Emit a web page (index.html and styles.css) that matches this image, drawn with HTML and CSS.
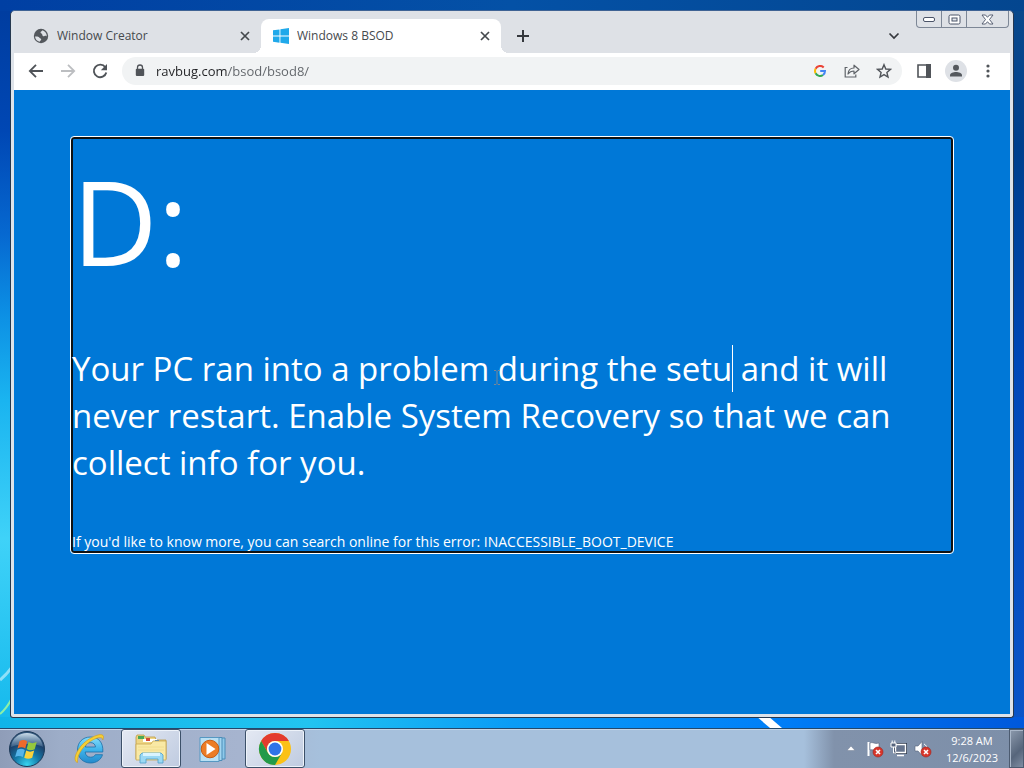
FILE: index.html
```html
<!DOCTYPE html>
<html lang="en">
	<head>
		<meta charset="UTF-8" />
		<title>Windows 8 BSOD</title>
		<meta name="viewport" content="width=device-width,initial-scale=1" />
		<link rel="stylesheet" href="styles.css">
	</head>
	<body>
		<div class="desktop">
			<svg class="streak streak-right" width="30" height="12" viewBox="0 0 30 12" aria-hidden="true"><path d="M2 0h12l14 12H16z" fill="#fff" /></svg>
			<svg class="streak streak-left" width="12" height="56" viewBox="0 0 12 56" fill="none" aria-hidden="true"><path d="M0 14Q7 8 12 1" stroke="#8fe0f8" stroke-width="3" /><path d="M0 48Q7 42 12 32" stroke="#8cf0a8" stroke-width="2" /></svg>
			<main class="window">
				<div class="caption">
					<button type="button" class="caption-min" aria-label="Minimize"><svg width="13" height="7" viewBox="0 0 13 7"><rect x=".5" y="1.500" width="11" height="4" rx="1.500" fill="#fff" stroke="#4b5468" /></svg></button>
					<button type="button" class="caption-max" aria-label="Maximize"><svg width="13" height="11" viewBox="0 0 13 11"><rect x="1" y="1" width="11" height="9" rx="1.500" fill="#fff" stroke="#4b5468" /><rect x="4" y="4" width="5" height="3" fill="#e4e8ee" stroke="#4b5468" /></svg></button>
					<button type="button" class="caption-close" aria-label="Close"><svg width="13" height="11" viewBox="0 0 13 11"><path d="M1 1h3.500l2 2.300L8.500 1H12L8.500 5.500 12 10H8.500l-2-2.300-2 2.300H1l3.500-4.500z" fill="#fff" stroke="#4b5468" stroke-width=".9" /></svg></button>
				</div>
				<header class="tabs">
					<div class="tab">
						<svg width="16" height="16" viewBox="0 0 16 16"><circle cx="8" cy="8" r="7.200" fill="#54585d" /><path d="M2 8.500c2-.3 3.500 0 4.200 1 .6 1 2 .7 2 2 0 1-1.200 1.200-1.500 2.300C4 13.300 2.200 11 2 8.500zM9.500 2.200c-.2 1-1.800 1-2 2.100-.1 1 1 1 1.500 1.700.6.8.2 2 1.400 2.300 1 .2 1.200-.8 2.600-.5l.8.600C13.900 5.500 12 3 9.500 2.200z" fill="#dee1e6" /></svg>
						<span class="tab-title">Window Creator</span>
						<button type="button" aria-label="Close tab"><svg width="10" height="10" viewBox="0 0 10 10"><path d="M1 1l8 8M9 1L1 9" stroke="#45494d" stroke-width="1.700" /></svg></button>
					</div>
					<div class="tab tab-active">
						<svg width="16" height="16" viewBox="0 0 16 16" fill="#20a9ea"><path d="M0 2.300L6.500 1.400V7.600H0zM7.400 1.300L16 0V7.600H7.400zM0 8.500H6.500V14.700L0 13.800zM7.400 8.500H16V16L7.400 14.800z" /></svg>
						<span class="tab-title">Windows 8 BSOD</span>
						<button type="button" aria-label="Close tab"><svg width="10" height="10" viewBox="0 0 10 10"><path d="M1 1l8 8M9 1L1 9" stroke="#45494d" stroke-width="1.700" /></svg></button>
					</div>
					<button type="button" class="tab-new" aria-label="New tab"><svg width="12" height="12" viewBox="0 0 12 12"><path d="M6 0v12M0 6h12" stroke="#35383d" stroke-width="2" /></svg></button>
					<button type="button" class="tab-search" aria-label="Search tabs"><svg width="12" height="8" viewBox="0 0 12 8"><path d="M1.500 1.500L6 6l4.500-4.500" fill="none" stroke="#35383d" stroke-width="1.700" /></svg></button>
				</header>
				<nav class="toolbar">
					<button type="button" aria-label="Back"><svg width="16" height="16" viewBox="0 0 16 16" fill="none" stroke="#4f5358" stroke-width="1.800"><path d="M15 8H2.500M8 1.800L1.800 8 8 14.200" /></svg></button>
					<button type="button" aria-label="Forward"><svg width="16" height="16" viewBox="0 0 16 16" fill="none" stroke="#bcbec1" stroke-width="1.800"><path d="M1 8h12.500M8 1.800L14.200 8 8 14.200" /></svg></button>
					<button type="button" aria-label="Reload"><svg width="16" height="16" viewBox="0 0 16 16"><path d="M13.300 4.200A6.300 6.300 0 1 0 14.300 9.500" fill="none" stroke="#4f5358" stroke-width="1.900" /><path d="M15 1v6.200H8.800z" fill="#4f5358" /></svg></button>
					<div class="address">
						<svg class="lock" width="10" height="13" viewBox="0 0 10 13"><path d="M2.500 6V3.500a2.500 2.500 0 0 1 5 0V6" fill="none" stroke="#505459" stroke-width="1.300" /><rect x=".8" y="4.700" width="8.400" height="7.300" rx="1" fill="#505459" /></svg>
						<input class="url" type="text" value="ravbug.com/bsod/bsod8/" aria-label="Address" spellcheck="false" />
						<button type="button" aria-label="Search with Google"><svg width="12" height="12" viewBox="0 0 12 12" fill="none" stroke-width="2"><path d="M9.700 2.500A5 5 0 0 0 1.600 3.700" stroke="#ea4335" /><path d="M1.600 3.700a5 5 0 0 0 0 4.600" stroke="#fbbc05" /><path d="M1.600 8.300A5 5 0 0 0 9 10" stroke="#34a853" /><path d="M9 10A5 5 0 0 0 11 6H6.200" stroke="#4285f4" /></svg></button>
						<button type="button" aria-label="Share"><svg width="16" height="16" viewBox="0 0 16 16" fill="none" stroke="#5f6368" stroke-width="1.200"><path d="M3.500 4.500H1.200V14h10.600v-2.500" /><path d="M4 11c.3-4 2.500-6 6-6V2.200L15 6.500l-5 4.300V8C7.500 8 5.500 9 4 11z" stroke-linejoin="round" /></svg></button>
						<button type="button" aria-label="Bookmark this tab"><svg width="16" height="16" viewBox="0 0 16 16"><path d="M8 1.700l1.800 4.300 4.700.4-3.600 3.100 1.100 4.600L8 11.600l-4 2.500 1.100-4.600L1.500 6.400l4.700-.4z" fill="none" stroke="#505459" stroke-width="1.400" /></svg></button>
					</div>
					<button type="button" aria-label="Side panel"><svg width="14" height="14" viewBox="0 0 14 14"><path d="M1 1h12v12H1z" fill="#fff" stroke="#505459" stroke-width="1.600" /><path d="M9 0h5v14H9z" fill="#505459" /></svg></button>
					<button type="button" aria-label="Profile"><svg width="22" height="22" viewBox="0 0 22 22"><circle cx="11" cy="11" r="11" fill="#dee1e6" /><circle cx="11" cy="7.800" r="3" fill="#54585d" /><path d="M5 16.500v-1.200C5 13 8.500 12 11 12s6 1 6 3.300v1.200z" fill="#54585d" /></svg></button>
					<button type="button" aria-label="Menu"><svg width="4" height="14" viewBox="0 0 4 14" fill="#505459"><circle cx="2" cy="2" r="1.600" /><circle cx="2" cy="7" r="1.600" /><circle cx="2" cy="12" r="1.600" /></svg></button>
				</nav>
				<section class="page">
					<div class="bsod" contenteditable="true" spellcheck="false">
						<h1>D:</h1>
						<p class="message">Your PC ran into a problem<svg class="pointer" width="8" height="17" viewBox="0 0 8 17" aria-hidden="true"><path d="M1 1.500h2l1 1 1-1h2M4 2.500v12M1 15.500h2l1-1 1 1h2" fill="none" stroke="#7d8794" /></svg> during the setu<span class="caret"></span> and it will never restart. Enable System Recovery so that we can collect info for you.</p>
						<p class="error">If you'd like to know more, you can search online for this error: INACCESSIBLE_BOOT_DEVICE</p>
					</div>
				</section>
			</main>
		</div>
		<footer class="taskbar">
			<button type="button" class="start" aria-label="Start">
				<svg width="38" height="38" viewBox="0 0 38 38">
					<defs>
						<radialGradient id="orb" cx=".5" cy=".95" r=".9"><stop offset="0" stop-color="#39d5f0" /><stop offset=".4" stop-color="#1479a8" /><stop offset=".75" stop-color="#1c3f69" /><stop offset="1" stop-color="#35597f" /></radialGradient>
						<linearGradient id="gloss" x2="0" y2="1"><stop offset="0" stop-color="#dcebf5" stop-opacity=".9" /><stop offset="1" stop-color="#8fb4d0" stop-opacity=".25" /></linearGradient>
					</defs>
					<circle cx="19" cy="19" r="17.500" fill="url(#orb)" stroke="#1d3a58" />
					<path d="M3 17C4 8 11 3 19 3s15 5 16 14c-6-4-24-4-32 0z" fill="url(#gloss)" />
					<path d="M11.500 11.300c3-1.800 5.500-1.500 7.700.1l-2 7.200c-2.300-1.500-4.700-1.700-7.700-.2z" fill="#ee6a2b" />
					<path d="M20.500 12c2.500 1.500 5 1.500 8.200 0l-2 7.300c-3 1.400-5.600 1.300-8-.2z" fill="#94c83d" />
					<path d="M9.200 19.700c3-1.400 5.400-1.200 7.600.2l-2 7.200c-2.300-1.400-4.800-1.600-7.700-.2z" fill="#56b4ea" />
					<path d="M18.200 20.500c2.500 1.500 5 1.500 8 .1l-2 7.200c-3 1.400-5.500 1.300-8-.1z" fill="#fbd23b" />
				</svg>
			</button>
			<button type="button" class="task" aria-label="Internet Explorer">
				<svg width="34" height="34" viewBox="0 0 34 34">
					<defs><linearGradient id="ie" x2="0" y2="1"><stop offset="0" stop-color="#86dcfa" /><stop offset=".5" stop-color="#3eb3ea" /><stop offset="1" stop-color="#2489cc" /></linearGradient></defs>
					<path d="M18.500 5C10.500 5 5.500 10.500 5.500 18S11 31 18.500 31c6 0 10.500-3.200 12-8.300h-7.200c-.9 1.700-2.500 2.500-4.700 2.500-3.200 0-5.200-2-5.400-5.200h17.600C31.500 10.500 26.500 5 18.500 5zm-5.200 10c.5-2.800 2.400-4.400 5.200-4.400s4.700 1.600 5 4.400z" fill="url(#ie)" stroke="#1c70a8" stroke-width=".8" />
					<path d="M5.500 30.500C-.5 29 5 15.500 15 8.500 23 2.800 31.500.500 31.500 5c0 1-.3 2-.8 3 .2-2.700-3-3.500-9.500-.3C12 12.300 4.500 23 5.500 30.500z" fill="#f5cf35" stroke="#d39b1b" stroke-width=".6" />
				</svg>
			</button>
			<button type="button" class="task task-open" aria-label="Windows Explorer">
				<svg width="34" height="34" viewBox="0 0 34 34" stroke-width=".8">
					<path d="M2 27V5l1-2h7l1 2h10l1 3h10v19z" fill="#eed685" stroke="#bd9a42" />
					<path d="M4 4h6v3H4z" fill="#49a957" /><path d="M9 7h14v3H9z" fill="#fff" /><path d="M12 6h4v3h-4z" fill="#d34b38" /><path d="M21 8h4v3h-4z" fill="#4382d6" />
					<path d="M2 12h15l2-3h13v19H2z" fill="#f9e9a5" stroke="#c9a74f" />
					<path d="M4 15h26M4 18h26" stroke="#efd98b" />
					<path d="M6 31v-8l2-2h19l2 2v8h-5v-4H12v4z" fill="#9bd9f4" stroke="#4b9ecb" /><path d="M9 21h17v3H9z" fill="#d9f4ff" />
				</svg>
			</button>
			<button type="button" class="task" aria-label="Windows Media Player">
				<svg width="28" height="28" viewBox="0 0 28 28">
					<path d="M8 3h18v21H8z" fill="#8ec9ea" stroke="#4b8db8" /><path d="M5 2.500h18v23H5z" fill="#a4d6f0" stroke="#4b8db8" /><path d="M1 2.500h19v24H1z" fill="#b9e0f4" stroke="#5698c2" />
					<circle cx="11" cy="14" r="8.800" fill="#ec7c25" stroke="#c65c14" /><path d="M7.500 8l9 6-9 6z" fill="#fff" />
				</svg>
			</button>
			<button type="button" class="task task-open" aria-label="Google Chrome">
				<svg width="34" height="34" viewBox="0 0 34 34">
					<circle cx="17" cy="17" r="16" fill="#fbc116" />
					<path d="M3.140 9A16 16 0 0 1 30.860 9H17a8 8 0 0 0-6.930 12z" fill="#e33b2e" />
					<path d="M3.140 9A16 16 0 0 0 17 33l6.930-12a8 8 0 0 1-13.860 0z" fill="#229a4a" />
					<circle cx="17" cy="17" r="8" fill="#fff" /><circle cx="17" cy="17" r="6.400" fill="#2f74e8" />
				</svg>
			</button>
			<div class="tray">
				<button type="button" aria-label="Show hidden icons"><svg width="8" height="5" viewBox="0 0 8 5"><path d="M0 4.500L4 0l4 4.500z" fill="#fff" stroke="#5b6b84" stroke-width=".4" /></svg></button>
				<button type="button" aria-label="Action Center"><svg width="18" height="18" viewBox="0 0 18 18"><path d="M2.500 2v14" stroke="#fff" stroke-width="2" /><path d="M4 3c3-1.500 4 1.500 9 0v7c-5 1.500-6-1-9 0z" fill="#fff" stroke="#55617a" stroke-width=".6" /><circle cx="12" cy="12" r="5" fill="#d8362b" stroke="#9f211b" stroke-width=".6" /><path d="M10 10l4 4M14 10l-4 4" stroke="#fff" stroke-width="1.600" /></svg></button>
				<button type="button" aria-label="Network"><svg width="18" height="18" viewBox="0 0 18 18"><path d="M5.500 4.500h10v8h-10z" fill="#66748d" stroke="#2f3a4c" stroke-width="3" /><path d="M5.500 4.500h10v8h-10zM7 15.500h7" fill="#66748d" stroke="#fff" stroke-width="1.400" /><path d="M1 3h5v4H1zM2.200 3V.500M4.800 3V.500M3.500 7v6H6" fill="#56647d" stroke="#fff" /></svg></button>
				<button type="button" aria-label="Volume muted"><svg width="18" height="18" viewBox="0 0 18 18"><path d="M1 6h3l4-4.500v14L4 11H1z" fill="#fff" stroke="#55617a" stroke-width=".6" /><path d="M10 4c2 1 3 3 3 5" fill="none" stroke="#fff" /><circle cx="12" cy="12" r="5" fill="#d8362b" stroke="#9f211b" stroke-width=".6" /><path d="M10 10l4 4M14 10l-4 4" stroke="#fff" stroke-width="1.600" /></svg></button>
			</div>
			<button type="button" class="clock">9:28 AM<br />12/6/2023</button>
			<button type="button" class="peek" aria-label="Show desktop"></button>
		</footer>
	</body>
</html>
```

FILE: styles.css
```css
*{
	box-sizing:border-box;
}
body{
	margin:0;
	min-height:100vh;
	display:flex;
	flex-direction:column;
	font-family:"Segoe UI","Open Sans","Noto Sans",sans-serif;
	font-size:12px;
}
button{
	display:flex;
	align-items:center;
	justify-content:center;
	flex:none;
	padding:0;
	border:0;
	background:none;
	color:inherit;
	font:inherit;
}
svg{
	display:block;
	flex:none;
}

/* wallpaper */
.desktop{
	position:relative;
	flex:1;
	display:flex;
	padding:10px;
	background:
		linear-gradient(90deg,#003fa3,#0451a6 50%,#04468f) top/100% 11px no-repeat,
		linear-gradient(90deg,#10b4e8,#22c4f0 30%,#0a9cf6 50%,#0080f8 75%,#0058dc) bottom/100% 11px no-repeat,
		linear-gradient(#003c9e,#0047b4 18%,#0668d0 32%,#0c8fe4 43%,#1ab4f0 55%,#3fd2f8 74%,#14b8ec) left/14px 100% no-repeat,
		linear-gradient(#0a4a8c,#003f8c 20%,#0048b8 50%,#0a55c8) right/14px 100% no-repeat;
}
.streak{
	position:absolute;
}
.streak-right{
	right:240px;
	bottom:0;
}
.streak-left{
	left:0;
	bottom:6px;
}

/* browser window */
.window{
	position:relative;
	flex:1;
	display:flex;
	flex-direction:column;
	padding:0 3px 3px;
	border:1px solid #26384f;
	border-top-color:#3f6394;
	border-radius:5px 5px 3px 3px;
	background:#dee3e9;
}
.caption{
	position:absolute;
	top:0;
	right:4px;
	display:flex;
	height:17px;
	border:1px solid #7d8796;
	border-top:0;
	border-radius:0 0 4px 4px;
}
.caption button{
	width:25px;
	border-right:1px solid #7d8796;
}
.caption .caption-close{
	width:41px;
	border-right:0;
}
.tabs{
	display:flex;
	height:42px;
	padding:8px 102px 0 7px;
	background:#dee1e6;
}
.tab{
	position:relative;
	flex:0 1 240px;
	min-width:0;
	display:flex;
	align-items:center;
	gap:8px;
	padding:0 8px 1px 12px;
	color:#45494d;
}
.tab-title{
	flex:1;
	overflow:hidden;
	white-space:nowrap;
}
.tab button{
	width:16px;
	height:16px;
}
.tab-active{
	border-radius:8px 8px 0 0;
	background:#fff;
}
.tab-active::before,.tab-active::after{
	content:"";
	position:absolute;
	bottom:0;
	width:8px;
	height:8px;
}
.tab-active::before{
	right:100%;
	background:radial-gradient(circle at 0 0,transparent 8px,#fff 8px);
}
.tab-active::after{
	left:100%;
	background:radial-gradient(circle at 100% 0,transparent 8px,#fff 8px);
}
.tab-new{
	width:28px;
	margin-left:8px;
}
.tab-search{
	width:28px;
	margin-left:auto;
}
.toolbar{
	display:flex;
	align-items:center;
	gap:4px;
	height:37px;
	padding:0 8px 2px;
	background:#fff;
}
.toolbar button{
	width:28px;
	height:28px;
}
.address{
	flex:1;
	display:flex;
	align-items:center;
	gap:4px;
	height:28px;
	margin:0 4px;
	padding:0 4px 0 13px;
	border-radius:14px;
	background:#f1f3f4;
}
.lock{
	margin-right:7px;
}
/* host name is darker than the path after it */
.url{
	flex:1;
	min-width:0;
	padding:0;
	border:0;
	outline:0;
	background:linear-gradient(90deg,#202124 72px,#5f6368 72px);
	-webkit-background-clip:text;
	background-clip:text;
	color:transparent;
	font:13px/20px "Segoe UI","Open Sans","Noto Sans",sans-serif;
}

/* page */
.page{
	flex:1;
	padding:46px 56px;
	background:#0078d7;
	color:#fff;
}
.bsod{
	padding:4px 2px 2px 1px;
	border:1px solid #fff;
	border-radius:4px;
	box-shadow:inset 0 0 0 2px #101010;
	outline:0;
}
.bsod h1{
	margin:0 0 44px;
	font-size:118px;
	font-weight:400;
	line-height:160px;
}
.bsod p{
	margin:0;
}
.bsod .message{
	position:relative;
	margin-bottom:46px;
	font-size:33px;
	line-height:47px;
}
.caret{
	position:absolute;
	display:inline-block;
	width:1px;
	height:47px;
	background:#fff;
}
.pointer{
	position:absolute;
	display:inline-block;
	margin:24px 0 0 4px;
}
.error{
	font-size:14px;
	line-height:19px;
}

/* taskbar */
.taskbar{
	display:flex;
	align-items:stretch;
	gap:2px;
	height:40px;
	border-top:1px solid #23486c;
	box-shadow:inset 0 1px #c5d6e8;
	background:linear-gradient(90deg,#8f9db8,#9dadc8 60px,#a6b4cf 240px,#a6c0dc 320px,#a6c0dc calc(100% - 220px),#8192ab calc(100% - 190px),#7d8fa9);
}
.start{
	width:54px;
	margin-right:3px;
}
.task{
	width:60px;
}
.task-open{
	border:1px solid #3c5069;
	border-radius:3px;
	box-shadow:inset 0 0 0 1px #eef3fa;
	background:linear-gradient(135deg,#e4e9f3,#bfcbe0);
}
.tray{
	display:flex;
	margin-left:auto;
}
.tray button{
	width:24px;
}
.clock{
	width:70px;
	color:#fff;
	font-size:11px;
	line-height:17px;
}
.peek{
	width:15px;
	border:1px solid #4c5b70;
	box-shadow:inset 1px 1px #a9b6c8;
	background:linear-gradient(135deg,#8d9aad,#56657b 60%,#7f8da2);
}
```
